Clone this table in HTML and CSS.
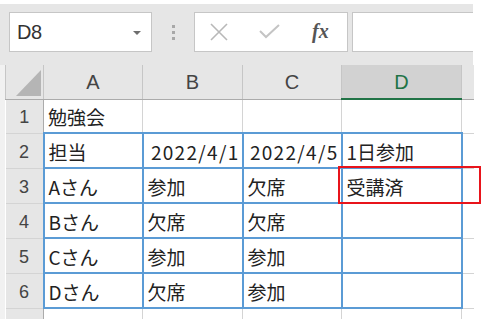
FILE: index.html
```html
<!DOCTYPE html>
<html lang="ja">
<head>
    <meta charset="UTF-8">
    <meta name="viewport" content="width=device-width, initial-scale=1.0">
    <title>勉強会 - Book1</title>
    <link rel="stylesheet" href="styles.css">
</head>
<body>
    <div class="app">
        <div class="formula-bar">
            <div class="name-box">
                <span class="cell-ref">D8</span>
                <span class="drop-arrow"></span>
            </div>
            <div class="grip"><i></i><i></i><i></i></div>
            <div class="fx-buttons">
                <svg class="btn-icon" width="20" height="18" viewBox="0 0 20 18">
                    <path d="M2 1 L18 17 M18 1 L2 17" stroke="#b8b8b8" stroke-width="1.6" fill="none"/>
                </svg>
                <svg class="btn-icon" width="22" height="16" viewBox="0 0 22 16">
                    <path d="M1 7 L7 13 L20 1" stroke="#c4c4c4" stroke-width="2" fill="none"/>
                </svg>
                <span class="fx">fx</span>
            </div>
            <div class="formula-input"></div>
        </div>

        <div class="sheet">
            <table class="grid">
                <colgroup>
                    <col class="c-rh">
                    <col class="c-a">
                    <col class="c-b">
                    <col class="c-c">
                    <col class="c-d">
                    <col class="c-e">
                </colgroup>
                <tr class="head-row">
                    <th class="corner"><span class="tri"></span></th>
                    <th>A</th>
                    <th>B</th>
                    <th>C</th>
                    <th class="active">D</th>
                    <th class="cut"></th>
                </tr>
                <tr>
                    <th class="rh">1</th>
                    <td>勉強会</td>
                    <td></td>
                    <td></td>
                    <td></td>
                    <td class="cut"></td>
                </tr>
                <tr>
                    <th class="rh">2</th>
                    <td class="box">担当</td>
                    <td class="box num">2022/4/1</td>
                    <td class="box num">2022/4/5</td>
                    <td class="box">1日参加</td>
                    <td class="cut"></td>
                </tr>
                <tr>
                    <th class="rh">3</th>
                    <td class="box">Aさん</td>
                    <td class="box">参加</td>
                    <td class="box">欠席</td>
                    <td class="box">受講済</td>
                    <td class="cut"></td>
                </tr>
                <tr>
                    <th class="rh">4</th>
                    <td class="box">Bさん</td>
                    <td class="box">欠席</td>
                    <td class="box">欠席</td>
                    <td class="box"></td>
                    <td class="cut"></td>
                </tr>
                <tr>
                    <th class="rh">5</th>
                    <td class="box">Cさん</td>
                    <td class="box">参加</td>
                    <td class="box">参加</td>
                    <td class="box"></td>
                    <td class="cut"></td>
                </tr>
                <tr>
                    <th class="rh">6</th>
                    <td class="box">Dさん</td>
                    <td class="box">欠席</td>
                    <td class="box">参加</td>
                    <td class="box"></td>
                    <td class="cut"></td>
                </tr>
                <tr>
                    <th class="rh"></th>
                    <td></td>
                    <td></td>
                    <td></td>
                    <td></td>
                    <td class="cut"></td>
                </tr>
            </table>
            <div class="mark"></div>
        </div>
    </div>
</body>
</html>
```

FILE: styles.css
```css
body {
    margin: 0;
    background-color: #fff;
    font-family: "Noto Sans CJK JP", "Noto Sans", sans-serif;
    color: #222;
    overflow: hidden;
}
.app {
    width: 473px;
    margin-top: 4px;
}

/* name box + formula bar */
.formula-bar {
    display: flex;
    align-items: flex-start;
    height: 61px;
    padding: 8px 0 0 9px;
    box-sizing: border-box;
    background-color: #e6e6e6;
}
.name-box {
    width: 143px;
    height: 40px;
    box-sizing: border-box;
    border: 1px solid #c6c6c6;
    background-color: #fff;
    display: flex;
    align-items: center;
    justify-content: space-between;
    padding: 0 10px 0 7px;
}
.cell-ref {
    font-family: "Liberation Sans", sans-serif;
    font-size: 20px;
    color: #333;
    letter-spacing: -0.5px;
}
.drop-arrow {
    width: 0;
    height: 0;
    border-left: 4px solid transparent;
    border-right: 4px solid transparent;
    border-top: 4px solid #6e6e6e;
    margin-top: 1px;
}
.grip {
    width: 42px;
    height: 40px;
    display: flex;
    flex-direction: column;
    align-items: center;
    justify-content: center;
    gap: 3px;
}
.grip i {
    width: 3px;
    height: 3px;
    background-color: #a8a8a8;
}
.fx-buttons {
    width: 154px;
    height: 40px;
    box-sizing: border-box;
    border: 1px solid #c6c6c6;
    background-color: #fff;
    display: flex;
    align-items: center;
    padding-left: 14px;
    gap: 30px;
}
.btn-icon {
    display: block;
}
.fx {
    font-family: "Liberation Serif", serif;
    font-style: italic;
    font-weight: bold;
    font-size: 20px;
    color: #555;
    margin-left: 1px;
    margin-top: -2px;
}
.formula-input {
    flex: 1;
    height: 40px;
    margin-left: 4px;
    box-sizing: border-box;
    border: 1px solid #c6c6c6;
    border-right: none;
    background-color: #fff;
}

/* worksheet */
.sheet {
    position: relative;
    background-color: #f1f1f1;
    padding-left: 5px;
}
.grid {
    border-collapse: collapse;
    table-layout: fixed;
    width: 468px;
    background-color: #fff;
}
.c-rh { width: 38px; }
.c-a { width: 99px; }
.c-b { width: 100px; }
.c-c { width: 99px; }
.c-d { width: 120px; }
.c-e { width: 12px; }

.grid td,
.grid th {
    border: 1px solid #d4d4d4;
    padding: 0 4px;
    height: 34px;
    box-sizing: border-box;
    white-space: nowrap;
    overflow: hidden;
    font-size: 19px;
    line-height: 20px;
}
.grid td {
    padding-top: 2px;
}
.grid th {
    font-weight: normal;
    background-color: #e6e6e6;
    color: #444;
    font-family: "Liberation Sans", sans-serif;
}
.head-row th {
    border-top: none;
    border-bottom: 1px solid #ababab;
    border-left-color: #c6c6c6;
    border-right-color: #c6c6c6;
    font-size: 20px;
}
.head-row th.active {
    background-color: #d2d2d2;
    color: #217346;
    border-bottom: 2px solid #217346;
}
.head-row .cut {
    border-right: none;
}
.corner {
    border-left: none;
    position: relative;
}
.tri {
    position: absolute;
    left: 10px;
    bottom: 3px;
    width: 0;
    height: 0;
    border-left: 25px solid transparent;
    border-bottom: 26px solid #b5b5b5;
}
.grid th.rh {
    font-size: 18px;
    border-left: none;
    border-right: 1px solid #ababab;
    text-align: center;
    padding: 2px 0 0;
}
.grid tr:not(.head-row) td {
    height: 35px;
}
.grid tr:nth-child(2) td {
    height: 34px;
}
.grid td.box {
    border: 2px solid #5b9bd5;
}
.grid td.num {
    text-align: right;
    padding-right: 2px;
    letter-spacing: 1.3px;
}
.grid td.cut {
    border-right: none;
    padding: 0;
}

/* red callout round D3 */
.mark {
    position: absolute;
    left: 338px;
    top: 101px;
    width: 143px;
    height: 38px;
    box-sizing: border-box;
    border: 2px solid #e8141b;
}
```
